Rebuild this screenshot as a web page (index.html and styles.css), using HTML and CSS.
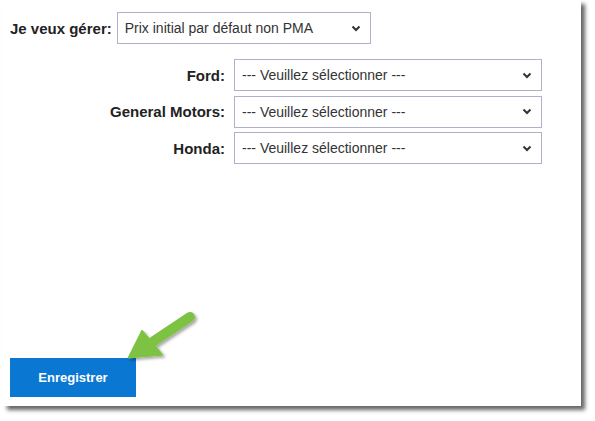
FILE: index.html
```html
<!DOCTYPE html>
<html lang="fr">
<head>
<meta charset="utf-8">
<link rel="stylesheet" href="styles.css">
</head>
<body>
<div class="card">
  <div class="main-row">
    <label class="main-label">Je veux gérer:</label>
    <div class="select main-select"><span>Prix initial par défaut non PMA</span><svg class="chev" width="10" height="7" viewBox="0 0 10 7"><path d="M1.5 1.5 L5 5 L8.5 1.5" fill="none" stroke="#333" stroke-width="2"/></svg></div>
  </div>
  <div class="brands">
    <label class="brand-label">Ford:</label>
    <div class="select"><span>--- Veuillez sélectionner ---</span><svg class="chev" width="10" height="7" viewBox="0 0 10 7"><path d="M1.5 1.5 L5 5 L8.5 1.5" fill="none" stroke="#333" stroke-width="2"/></svg></div>
    <label class="brand-label">General Motors:</label>
    <div class="select"><span>--- Veuillez sélectionner ---</span><svg class="chev" width="10" height="7" viewBox="0 0 10 7"><path d="M1.5 1.5 L5 5 L8.5 1.5" fill="none" stroke="#333" stroke-width="2"/></svg></div>
    <label class="brand-label">Honda:</label>
    <div class="select"><span>--- Veuillez sélectionner ---</span><svg class="chev" width="10" height="7" viewBox="0 0 10 7"><path d="M1.5 1.5 L5 5 L8.5 1.5" fill="none" stroke="#333" stroke-width="2"/></svg></div>
  </div>
  <button class="save">Enregistrer</button>
  <svg class="arrow" width="90" height="70" viewBox="0 0 90 70">
    <defs>
      <filter id="sh" x="-20%" y="-20%" width="150%" height="150%">
        <feDropShadow dx="2" dy="2" stdDeviation="1.5" flood-color="#000" flood-opacity="0.35"/>
      </filter>
    </defs>
    <g filter="url(#sh)" fill="#7dc242" stroke="#7dc242">
      <line x1="72" y1="17" x2="36" y2="41" stroke-width="10" stroke-linecap="round"/>
      <polygon points="24,30 45,55 10,58" stroke-width="1" stroke-linejoin="round"/>
    </g>
  </svg>
</div>
</body>
</html>
```
FILE: styles.css
```css
html, body {
  margin: 0;
  padding: 0;
  background: #fff;
}
body {
  font-family: "Liberation Sans", Arial, sans-serif;
  color: #333;
  min-height: 421px;
}
.card {
  position: relative;
  margin-left: 3px;
  width: 578px;
  height: 406px;
  background: #fff;
  box-shadow: 4px 4px 4px rgba(0, 0, 0, 0.6);
  box-sizing: border-box;
  padding: 12px 0 9px 7px;
  display: flex;
  flex-direction: column;
}
.main-row {
  display: flex;
  align-items: center;
  gap: 5px;
}
.main-label, .brand-label {
  font-weight: bold;
  font-size: 15px;
  color: #222;
}
.select {
  box-sizing: border-box;
  height: 32px;
  border: 1px solid #aeb1c9;
  background: #fff;
  display: flex;
  align-items: center;
  justify-content: space-between;
  padding: 0 9px 0 7px;
  font-size: 14px;
  color: #333;
}
.main-select {
  width: 254px;
}
.chev {
  display: block;
}
.brands {
  margin-top: 15px;
  display: grid;
  grid-template-columns: 215px 308px;
  column-gap: 9px;
  row-gap: 4.5px;
  align-items: center;
}
.brand-label {
  text-align: right;
}
.save {
  margin-top: auto;
  width: 126px;
  height: 39px;
  border: none;
  background: #0a78d2;
  color: #fff;
  font-family: "Liberation Sans", Arial, sans-serif;
  font-weight: bold;
  font-size: 13px;
  padding: 0;
}
.arrow {
  position: absolute;
  left: 115px;
  top: 300px;
}
```
